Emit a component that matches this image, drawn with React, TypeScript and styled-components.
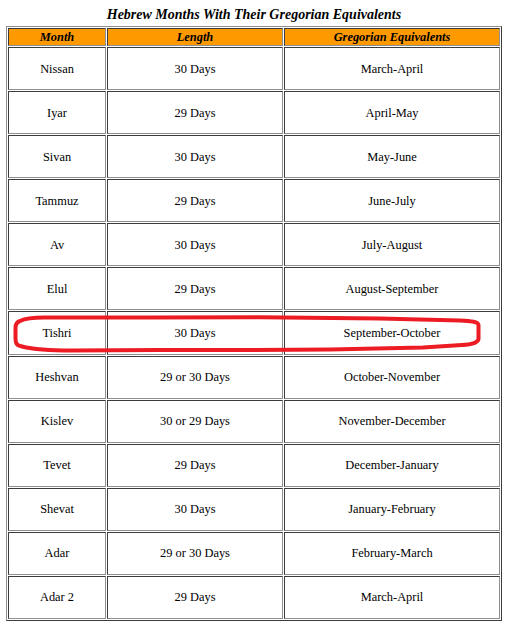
import React, { FC } from 'react'
import styled, { createGlobalStyle } from 'styled-components'

type Month = { name: string; length: string; gregorian: string }

const months: Month[] = [
  { name: 'Nissan', length: '30 Days', gregorian: 'March-April' },
  { name: 'Iyar', length: '29 Days', gregorian: 'April-May' },
  { name: 'Sivan', length: '30 Days', gregorian: 'May-June' },
  { name: 'Tammuz', length: '29 Days', gregorian: 'June-July' },
  { name: 'Av', length: '30 Days', gregorian: 'July-August' },
  { name: 'Elul', length: '29 Days', gregorian: 'August-September' },
  { name: 'Tishri', length: '30 Days', gregorian: 'September-October' },
  { name: 'Heshvan', length: '29 or 30 Days', gregorian: 'October-November' },
  { name: 'Kislev', length: '30 or 29 Days', gregorian: 'November-December' },
  { name: 'Tevet', length: '29 Days', gregorian: 'December-January' },
  { name: 'Shevat', length: '30 Days', gregorian: 'January-February' },
  { name: 'Adar', length: '29 or 30 Days', gregorian: 'February-March' },
  { name: 'Adar 2', length: '29 Days', gregorian: 'March-April' },
]

const LIGHT = '#8f8f8f'
const DARK = '#3c3c3c'

const GlobalStyle = createGlobalStyle`
  html, body {
    margin: 0;
    padding: 0;
    background: #fff;
  }
  body {
    font-family: "Liberation Serif", "Times New Roman", serif;
    color: #000;
  }
`

const Page = styled.div`
  position: relative;
  width: 509px;
  height: 627px;
  padding: 7px 0 0 6px;
  box-sizing: border-box;
`

const Table = styled.table`
  width: 496px;
  table-layout: fixed;
  border-collapse: separate;
  border-spacing: 1px;
  border-style: solid;
  border-width: 1px;
  border-color: ${LIGHT} ${DARK} ${DARK} ${LIGHT};
`

const Caption = styled.caption`
  font-size: 14px;
  font-weight: bold;
  font-style: italic;
  line-height: 16px;
  padding-bottom: 3px;
  text-align: center;
`

const HeadRow = styled.tr`
  height: 18px;
`

const BodyRow = styled.tr`
  height: 43.08px;
`

const Cell = styled.td<{ $head?: boolean }>`
  padding: 0;
  text-align: center;
  vertical-align: middle;
  font-size: 12.4px;
  line-height: 14px;
  border-style: solid;
  border-width: 1px;
  border-color: ${DARK} ${LIGHT} ${LIGHT} ${DARK};
  background: ${p => (p.$head ? '#ff9900' : '#fff')};
  font-weight: ${p => (p.$head ? 'bold' : 'normal')};
  font-style: ${p => (p.$head ? 'italic' : 'normal')};
`

const Marker = styled.svg`
  position: absolute;
  top: 0;
  left: 0;
  pointer-events: none;
`

const Highlight: FC = () => (
  <Marker width="509" height="627" viewBox="0 0 509 627">
    <path
      d="M20 321 C26 318 34 317.5 44 317.5 L150 317.5 L260 317.3 L380 318.5 L460 320.5
         C472 321 478 322 478.5 325 L478.5 339 C478 343 472 344.5 462 345
         L423 347.5 L330 349.5 L250 350 L160 350 L72 350.5
         C50 350.5 30 348.5 22 346.5 C16 345 15.5 343 15.5 338 L15.5 328
         C15.5 324 17 322 20 321 Z"
      fill="none"
      stroke="#ed1c24"
      strokeWidth="4"
      strokeLinejoin="round"
    />
  </Marker>
)

const App: FC = () => (
  <Page>
    <GlobalStyle />
    <Table>
      <Caption>Hebrew Months With Their Gregorian Equivalents</Caption>
      <colgroup>
        <col style={{ width: 98 }} />
        <col style={{ width: 176 }} />
        <col style={{ width: 216 }} />
      </colgroup>
      <thead>
        <HeadRow>
          <Cell as="th" $head>Month</Cell>
          <Cell as="th" $head>Length</Cell>
          <Cell as="th" $head>Gregorian Equivalents</Cell>
        </HeadRow>
      </thead>
      <tbody>
        {months.map(m => (
          <BodyRow key={m.name}>
            <Cell>{m.name}</Cell>
            <Cell>{m.length}</Cell>
            <Cell>{m.gregorian}</Cell>
          </BodyRow>
        ))}
      </tbody>
    </Table>
    <Highlight />
  </Page>
)

export default App
